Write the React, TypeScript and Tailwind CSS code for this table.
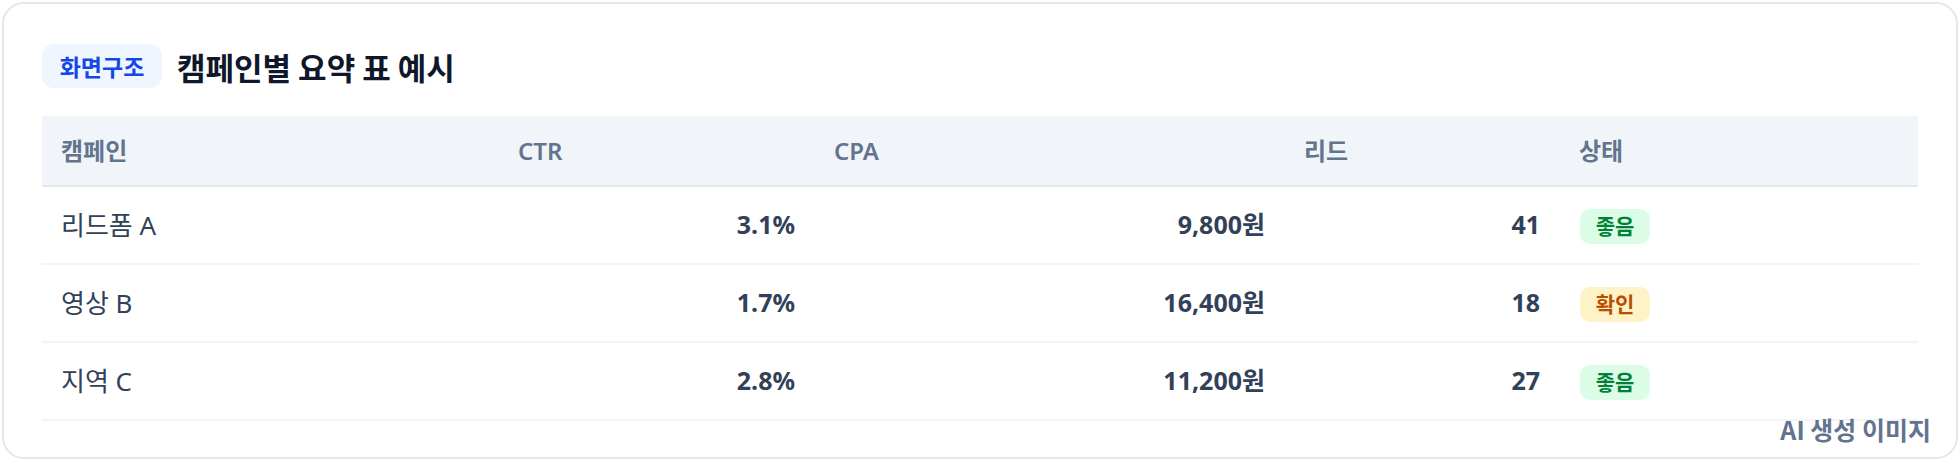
import React from 'react'

const rows = [
	{ name: '리드폼 A', ctr: '3.1%', cpa: '9,800원', leads: '41', status: '좋음', tone: 'good' },
	{ name: '영상 B', ctr: '1.7%', cpa: '16,400원', leads: '18', status: '확인', tone: 'check' },
	{ name: '지역 C', ctr: '2.8%', cpa: '11,200원', leads: '27', status: '좋음', tone: 'good' },
]

const App = () => {
	return (
		<div className="w-[1960px] h-[464px] p-[2px] bg-white" style={{ fontFamily: '"Noto Sans CJK KR", "Noto Sans", sans-serif' }}>
			<div className="relative rounded-[22px] border-2 border-slate-200 bg-white px-[38px] pt-[40px] pb-[36px]">
				<div className="flex items-center gap-[15px] mb-[28px]">
					<span className="h-[44px] w-[120px] flex items-center justify-center rounded-[12px] bg-blue-50 text-[23px] font-semibold text-blue-700">화면구조</span>
					<h1 className="text-[31px] font-bold leading-none text-slate-900">캠페인별 요약 표 예시</h1>
				</div>
				<table className="w-full table-fixed border-collapse" style={{ fontFamily: '"Noto Sans", "Noto Sans CJK KR", sans-serif' }}>
					<colgroup>
						<col className="w-[457px]" />
						<col className="w-[316px]" />
						<col className="w-[470px]" />
						<col className="w-[275px]" />
						<col />
					</colgroup>
					<thead>
						<tr className="h-[70px] bg-slate-100 border-b-2 border-slate-200">
							{['캠페인', 'CTR', 'CPA', '리드', '상태'].map((h) => (
								<th key={h} className="px-[19px] text-left text-[24px] font-semibold text-slate-500">{h}</th>
							))}
						</tr>
					</thead>
					<tbody>
						{rows.map((r) => (
							<tr key={r.name} className="h-[78px] border-b-2 border-slate-100 text-[25px] text-slate-700">
								<td className="px-[19px] text-left text-[26px]">{r.name}</td>
								<td className="px-[20px] text-right font-bold">{r.ctr}</td>
								<td className="px-[20px] text-right font-bold">{r.cpa}</td>
								<td className="px-[20px] text-right font-bold">{r.leads}</td>
								<td className="px-[20px]">
									{r.tone === 'good' ? (
										<span className="inline-flex h-[35px] w-[70px] items-center justify-center rounded-[10px] bg-green-100 text-[21px] font-bold text-green-700">{r.status}</span>
									) : (
										<span className="inline-flex h-[35px] w-[70px] items-center justify-center rounded-[10px] bg-amber-100 text-[21px] font-bold text-amber-700">{r.status}</span>
									)}
								</td>
							</tr>
						))}
					</tbody>
				</table>
				<div className="absolute right-[25px] bottom-[15px] text-[25px] font-bold leading-none text-slate-500">AI 생성 이미지</div>
			</div>
		</div>
	)
}

export default App
